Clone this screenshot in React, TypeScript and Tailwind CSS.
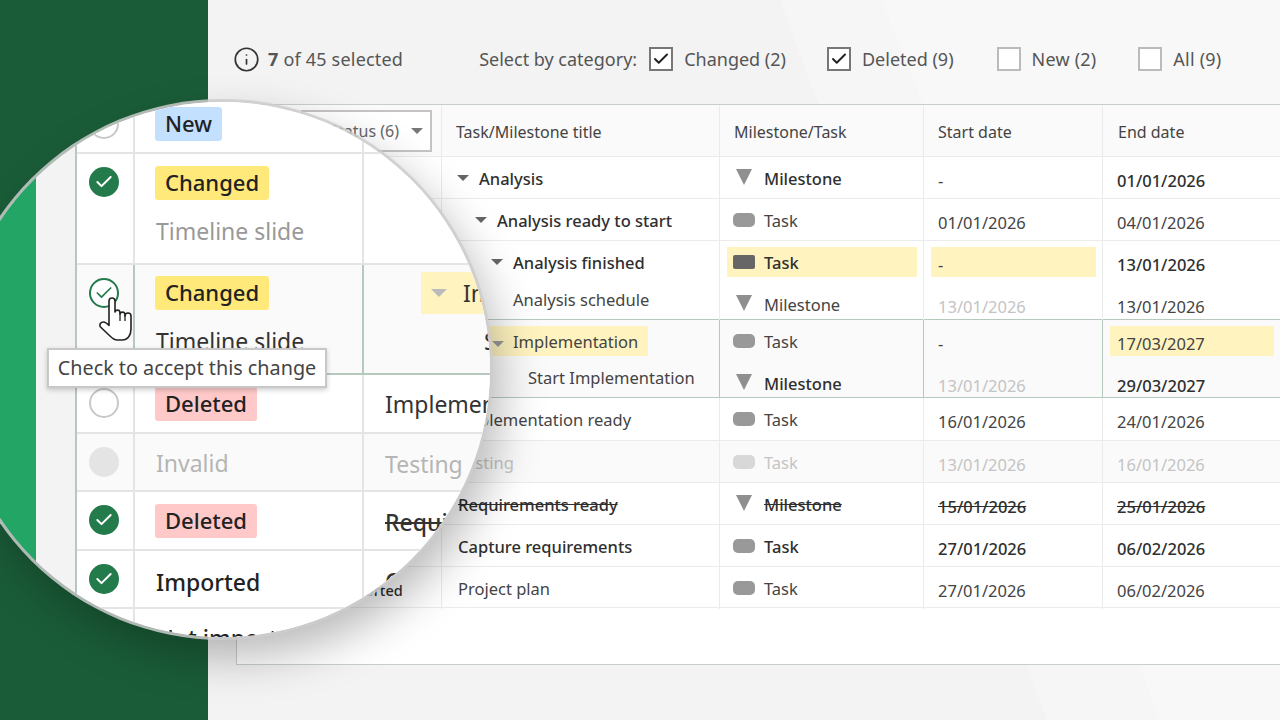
import { Check, Info } from 'lucide-react';
import type { ReactNode } from 'react';

const FONT = 'font-["Noto_Sans",sans-serif]';

// small table text styles
const normal = 'text-[#444]';
const bold = 'font-medium text-[#2f2f2f]';
const faded = 'text-[#c4c4c4]';
const strike = 'font-medium text-[#2f2f2f] line-through';
const mark = 'bg-[#fff3bf]';

type Kind = 'milestone' | 'task' | 'taskDark' | 'taskFaded';

function TypeIcon({ kind }: { kind: Kind }) {
  if (kind === 'milestone') {
    return (
      <svg width="22" height="18" viewBox="0 0 22 18" className="shrink-0 -mt-[2px]">
        <path d="M3 1h16l-8 16z" fill="#8f8f8f" />
      </svg>
    );
  }
  if (kind === 'taskDark') return <div className="w-[22px] h-[14px] shrink-0 rounded-[2px] bg-[#666]" />;
  if (kind === 'taskFaded') return <div className="w-[22px] h-[14px] shrink-0 rounded-[5px] bg-[#d8d8d8]" />;
  return <div className="w-[22px] h-[14px] shrink-0 rounded-[5px] bg-[#999]" />;
}

function Arrow({ className = 'border-t-[#666]' }: { className?: string }) {
  return <span className={`inline-block w-0 h-0 border-x-[6px] border-x-transparent border-t-[6px] ${className}`} />;
}

function TitleLine({ indent, arrow, className, h = 'h-[42px]', children }: { indent: string; arrow?: boolean; className?: string; h?: string; children: ReactNode }) {
  return (
    <div className={`flex items-center ${h} ${indent}`}>
      {arrow && <span className="w-[22px] flex -ml-[22px]"><Arrow /></span>}
      <span className={`whitespace-nowrap translate-y-[1px] ${className}`}>{children}</span>
    </div>
  );
}

function TypeLine({ kind, className, box = 'h-[30px] w-[190px]', h = 'h-[42px]', children }: { kind: Kind; className: string; box?: string; h?: string; children: ReactNode }) {
  return (
    <div className={`flex items-center ${h} pl-[7px]`}>
      <div className={`flex items-center gap-[9px] pl-[6px] ${box}`}>
        <TypeIcon kind={kind} />
        <span className={`translate-y-[1px] ${className}`}>{children}</span>
      </div>
    </div>
  );
}

function DateLine({ className, box = '', children }: { className: string; box?: string; children: ReactNode }) {
  return (
    <div className="flex items-center h-[42px] pl-[7px] pr-[6px]">
      <div className={`w-full h-[30px] flex items-center pl-[7px] ${box}`}>
        <span className={`translate-y-[3px] ${className}`}>{children}</span>
      </div>
    </div>
  );
}

function Row({ border = 'border-[#ebebeb]', bg = '', height, left, title, type, start, end }: { border?: string; bg?: string; height: string; left?: ReactNode; title: ReactNode; type: ReactNode; start: ReactNode; end: ReactNode }) {
  const cell = `border-r-[1.5px] ${border}`;
  return (
    <div className={`grid grid-cols-[205px_278px_204px_179px_1fr] border-b-[1.5px] ${border} ${bg} ${height}`}>
      <div className={cell}>{left}</div>
      <div className={cell}>{title}</div>
      <div className={cell}>{type}</div>
      <div className={cell}>{start}</div>
      <div>{end}</div>
    </div>
  );
}

function TopCheck({ checked, className = '', label = '', children }: { checked?: boolean; className?: string; label?: string; children: ReactNode }) {
  return (
    <div className={`flex items-center gap-[11px] ${className}`}>
      <div className={`w-[24px] h-[24px] flex items-center justify-center bg-white border-2 ${checked ? 'border-[#777]' : 'border-[#bbb]'}`}>
        {checked && <Check size={18} strokeWidth={2.6} className="text-[#222]" />}
      </div>
      <span className={label}>{children}</span>
    </div>
  );
}

function SmallTable() {
  return (
    <div className="ml-[28px] h-[561px] border-[1.5px] border-r-0 border-[#c8cfcb] bg-white text-[16.5px] leading-none">
      <div className="grid grid-cols-[205px_278px_204px_179px_1fr] h-[52px] bg-[#fafafa] border-b-[1.5px] border-[#ebebeb] text-[16px] text-[#444]">
        <div className="border-r-[1.5px] border-[#ebebeb] pl-[64px] pt-[5px]">
          <div className="flex items-center justify-end gap-[12px] h-[42px] w-[131px] pr-[7px] bg-white border-2 border-[#c4c4c4] text-[#666]">
            <span>Status (6)</span>
            <Arrow className="border-t-[#777]" />
          </div>
        </div>
        <div className="flex items-center pl-[14px] pt-[2px] border-r-[1.5px] border-[#ebebeb]">Task/Milestone title</div>
        <div className="flex items-center pl-[14px] pt-[2px] border-r-[1.5px] border-[#ebebeb]">Milestone/Task</div>
        <div className="flex items-center pl-[14px] pt-[2px] border-r-[1.5px] border-[#ebebeb]">Start date</div>
        <div className="flex items-center pl-[15px] pt-[2px]">End date</div>
      </div>

      <Row height="h-[42px]"
        title={<TitleLine indent="pl-[37px]" arrow className={bold}>Analysis</TitleLine>}
        type={<TypeLine kind="milestone" className={bold}>Milestone</TypeLine>}
        start={<DateLine className={normal}>-</DateLine>}
        end={<DateLine className={bold}>01/01/2026</DateLine>} />
      <Row height="h-[42px]"
        title={<TitleLine indent="pl-[55px]" arrow className={bold}>Analysis ready to start</TitleLine>}
        type={<TypeLine kind="task" className={normal}>Task</TypeLine>}
        start={<DateLine className={normal}>01/01/2026</DateLine>}
        end={<DateLine className={normal}>04/01/2026</DateLine>} />
      <Row height="h-[79px]" border="border-[#ebebeb] border-b-[#b5c9bd]"
        title={<>
          <TitleLine indent="pl-[71px]" arrow className={bold}>Analysis finished</TitleLine>
          <TitleLine indent="pl-[71px]" h="h-[32px]" className={normal}>Analysis schedule</TitleLine>
        </>}
        type={<>
          <TypeLine kind="taskDark" className={bold} box={`h-[30px] w-[190px] ${mark}`}>Task</TypeLine>
          <TypeLine kind="milestone" className={normal}>Milestone</TypeLine>
        </>}
        start={<>
          <DateLine className={normal} box={mark}>-</DateLine>
          <DateLine className={faded}>13/01/2026</DateLine>
        </>}
        end={<>
          <DateLine className={bold}>13/01/2026</DateLine>
          <DateLine className={normal}>13/01/2026</DateLine>
        </>} />
      <Row height="h-[78px]" border="border-[#b5c9bd]" bg="bg-[#fafafa]"
        title={<>
          <div className="flex items-center h-[42px] pl-[70px]">
            <div className={`flex items-center h-[30px] w-[159px] -ml-[23px] pl-[3px] ${mark}`}>
              <span className="w-[21px]"><Arrow className="border-t-[#999]" /></span>
              <span className={`translate-y-[1px] ${normal}`}>Implementation</span>
            </div>
          </div>
          <TitleLine indent="pl-[86px]" h="h-[30px]" className={normal}>Start Implementation</TitleLine>
        </>}
        type={<>
          <TypeLine kind="task" className={normal}>Task</TypeLine>
          <TypeLine kind="milestone" className={bold}>Milestone</TypeLine>
        </>}
        start={<>
          <DateLine className={normal}>-</DateLine>
          <DateLine className={faded}>13/01/2026</DateLine>
        </>}
        end={<>
          <DateLine className={normal} box={mark}>17/03/2027</DateLine>
          <DateLine className={bold}>29/03/2027</DateLine>
        </>} />
      <Row height="h-[43px]"
        title={<TitleLine indent="pl-[16px]" className={normal}>Implementation ready</TitleLine>}
        type={<TypeLine kind="task" className={normal}>Task</TypeLine>}
        start={<DateLine className={normal}>16/01/2026</DateLine>}
        end={<DateLine className={normal}>24/01/2026</DateLine>} />
      <Row height="h-[42px]" bg="bg-[#fafafa]"
        title={<TitleLine indent="pl-[16px]" className={faded}>Testing</TitleLine>}
        type={<TypeLine kind="taskFaded" className={faded}>Task</TypeLine>}
        start={<DateLine className={faded}>13/01/2026</DateLine>}
        end={<DateLine className={faded}>16/01/2026</DateLine>} />
      <Row height="h-[42px]"
        title={<TitleLine indent="pl-[16px]" className={strike}>Requirements ready</TitleLine>}
        type={<TypeLine kind="milestone" className={strike}>Milestone</TypeLine>}
        start={<DateLine className={strike}>15/01/2026</DateLine>}
        end={<DateLine className={strike}>25/01/2026</DateLine>} />
      <Row height="h-[42px]"
        title={<TitleLine indent="pl-[16px]" className={bold}>Capture requirements</TitleLine>}
        type={<TypeLine kind="task" className={bold}>Task</TypeLine>}
        start={<DateLine className={bold}>27/01/2026</DateLine>}
        end={<DateLine className={bold}>06/02/2026</DateLine>} />
      <Row height="h-[41px]"
        left={<div className="pl-[100px] pt-[16px] font-medium text-[#2f2f2f] text-[14.5px]">Imported</div>}
        title={<TitleLine indent="pl-[16px]" className={normal}>Project plan</TitleLine>}
        type={<TypeLine kind="task" className={normal}>Task</TypeLine>}
        start={<DateLine className={normal}>27/01/2026</DateLine>}
        end={<DateLine className={normal}>06/02/2026</DateLine>} />
    </div>
  );
}

// status circle in the magnified table
function Dot({ state }: { state: 'on' | 'hover' | 'off' | 'disabled' }) {
  if (state === 'on') {
    return (
      <div className="w-[30px] h-[30px] rounded-full bg-[#237a4b] flex items-center justify-center">
        <Check size={20} strokeWidth={2.4} className="text-white" />
      </div>
    );
  }
  if (state === 'hover') {
    return (
      <div className="w-[30px] h-[30px] rounded-full bg-white border-2 border-[#237a4b] flex items-center justify-center">
        <Check size={20} strokeWidth={2} className="text-[#237a4b]" />
      </div>
    );
  }
  if (state === 'disabled') return <div className="w-[30px] h-[30px] rounded-full bg-[#e4e4e4]" />;
  return <div className="w-[30px] h-[30px] rounded-full bg-white border-2 border-[#c8c8c8]" />;
}

function Badge({ color, children }: { color: string; children: ReactNode }) {
  return <div className={`inline-flex items-center h-[34px] px-[10px] pb-[2px] rounded-[3px] text-[22px] font-medium text-[#222] ${color}`}>{children}</div>;
}

function LensRow({ height, dot, status, dotPad = 'pt-[13px]', border = 'border-[#e4e4e4]', line = 'border-[#e4e4e4]', bg = 'bg-white', children }: { height: string; dot?: ReactNode; status: ReactNode; dotPad?: string; border?: string; line?: string; bg?: string; children?: ReactNode }) {
  return (
    <div className={`grid grid-cols-[58px_229px_1fr] border-b-2 ${border} ${bg} ${height}`}>
      <div className={`flex justify-center border-r-2 pr-[2px] ${dotPad} ${line}`}>{dot}</div>
      <div className={`pl-[20px] ${line} border-r-2`}>{status}</div>
      <div className="whitespace-nowrap overflow-hidden">{children}</div>
    </div>
  );
}

function Lens() {
  return (
    <div className="absolute left-[-45px] top-[102px] w-[535px] h-[535px] rounded-full overflow-hidden flex text-[23px] leading-none bg-[#f3f3f3] shadow-[0_0_0_3px_rgba(205,205,205,0.85),10px_20px_46px_rgba(0,0,0,0.28)]">
      <div className="w-[81px] shrink-0 bg-[#22a565]" />
      <div className="w-[39px] shrink-0" />
      <div className="flex-1 border-l-2 border-[#b8c8c0]">
        <LensRow height="h-[52px]" dotPad="pt-[7px]" dot={<Dot state="off" />}
          status={<div className="pt-[5px]"><Badge color="bg-[#c4e0ff]">New</Badge></div>} />
        <LensRow height="h-[111px]" dot={<Dot state="on" />}
          status={<div className="pt-[12px]">
            <Badge color="bg-[#ffe97a]">Changed</Badge>
            <div className="mt-[14px] h-[34px] pl-[1px] flex items-center text-[#999]">Timeline slide</div>
          </div>} />
        <LensRow height="h-[110px]" bg="bg-[#fafafa]" border="border-[#b5c9bd]" line="border-[#b5c9bd]" dot={<Dot state="hover" />}
          status={<div className="pt-[11px]">
            <Badge color="bg-[#ffe97a]">Changed</Badge>
            <div className="mt-[14px] h-[34px] pl-[1px] flex items-center text-[#333]">Timeline slide</div>
          </div>}>
          <div className="pt-[7px] pl-[57px]">
            <div className="flex items-center gap-[16px] h-[42px] pl-[10px] bg-[#fff3bf] text-[#333]">
              <span className="inline-block w-0 h-0 border-x-[8px] border-x-transparent border-t-[8px] border-t-[#bbb]" />
              <span>Implementation</span>
            </div>
          </div>
          <div className="pl-[120px] pt-[16px] text-[#333]">Start Implementation</div>
        </LensRow>
        <LensRow height="h-[59px]" dot={<Dot state="off" />}
          status={<div className="pt-[12px]"><Badge color="bg-[#ffc9c9]">Deleted</Badge></div>}>
          <div className="pl-[21px] pt-[18px] text-[#333]">Implementation ready</div>
        </LensRow>
        <LensRow height="h-[58px]" bg="bg-[#fafafa]" dot={<Dot state="disabled" />}
          status={<div className="pt-[18px] pl-[1px] text-[#b5b5b5]">Invalid</div>}>
          <div className="pl-[21px] pt-[19px] text-[#b5b5b5]">Testing</div>
        </LensRow>
        <LensRow height="h-[59px]" dot={<Dot state="on" />}
          status={<div className="pt-[12px]"><Badge color="bg-[#ffc9c9]">Deleted</Badge></div>}>
          <div className="pl-[21px] pt-[19px] font-medium text-[#333] line-through">Requirements ready</div>
        </LensRow>
        <LensRow height="h-[58px]" dot={<Dot state="on" />}
          status={<div className="pt-[20px] pl-[1px] font-medium text-[#222]">Imported</div>}>
          <div className="pl-[21px] pt-[19px] font-medium text-[#333]">Capture requirements</div>
        </LensRow>
        <LensRow height="h-[60px]" status={<div className="pt-[18px] pl-[1px] font-medium text-[#222]">Not imported</div>} />
      </div>
    </div>
  );
}

export default function App() {
  return (
    <div className={`relative w-[1280px] h-[720px] overflow-hidden flex bg-[#f3f3f3] ${FONT}`}>
      <div className="w-[208px] shrink-0 bg-[#1a5c38]" />
      <main className="relative flex-1 flex flex-col min-w-0">
        {/* faint diagonal bands behind the window */}
        <svg className="absolute inset-0" width="1072" height="720" viewBox="0 0 1072 720">
          <path d="M572 0h102l278 720H839z" fill="#f6f6f6" />
          <path d="M674 0h398v720H952z" fill="#f8f8f8" />
        </svg>
        <div className="relative h-[104px] flex items-center pl-[25px] pt-[14px] text-[18px] text-[#555] leading-none">
          <Info size={27} strokeWidth={1.5} className="text-[#333] mr-[8px]" />
          <span className="tracking-[0.2px]"><b className="font-bold">7</b> of 45 selected</span>
          <div className="flex items-center gap-[12px] ml-[76px]">
            <span>Select by category:</span>
            <TopCheck checked>Changed (2)</TopCheck>
          </div>
          <TopCheck checked className="ml-[41px]">Deleted (9)</TopCheck>
          <TopCheck className="ml-[43px]" label="tracking-[0.2px]">New (2)</TopCheck>
          <TopCheck className="ml-[42px]" label="tracking-[0.2px]">All (9)</TopCheck>
        </div>
        <div className="relative">
          <SmallTable />
        </div>
      </main>

      <Lens />

      {/* tooltip and pointer sit over the magnified table */}
      <div className="absolute left-[47px] top-[348px] h-[40px] w-[280px] flex items-center justify-center bg-white border-2 border-[#c8c8c8] shadow-[0_2px_5px_rgba(0,0,0,0.2)] text-[19.8px] text-[#444] whitespace-nowrap">
        Check to accept this change
      </div>
      <svg className="absolute left-[99px] top-[297px]" width="36" height="46" viewBox="0 0 36 46">
        <path d="M10 27V4a3 3 0 0 1 6 0v11a2.6 2.6 0 0 1 5 0v2a2.6 2.6 0 0 1 5 0v2a2.6 2.6 0 0 1 6 0v13c0 6-3 11-9 11h-5c-3 0-5-2-7-4L1.500 30c-1.500-2 0-5 3-5 2 0 4 2 5.500 3.500z" fill="#fff" stroke="#222" strokeWidth="1.600" strokeLinejoin="round" />
        <path d="M21 15v9M26 17v7" stroke="#222" strokeWidth="1.300" fill="none" />
      </svg>
    </div>
  );
}
